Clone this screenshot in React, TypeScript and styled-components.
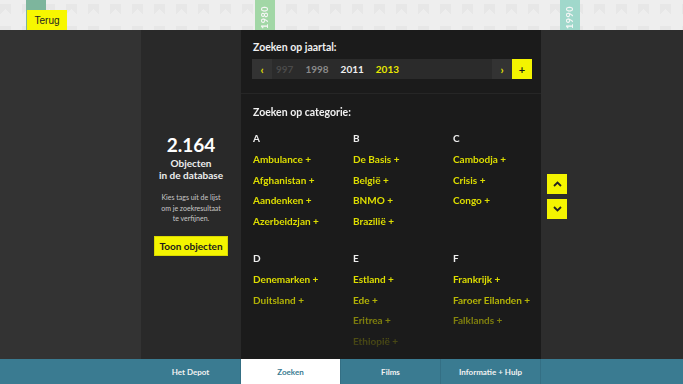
import styled, { createGlobalStyle } from "styled-components";

const GlobalStyle = createGlobalStyle`
  html, body {
    margin: 0;
    padding: 0;
    background: #1b1b1b;
    font-family: Lato, "Noto Sans", sans-serif;
  }
  * { box-sizing: border-box; }
`;

const Screen = styled.div`
  width: 683px;
  height: 384px;
  display: flex;
  flex-direction: column;
  overflow: hidden;
`;

const Timeline = styled.div`
  position: relative;
  height: 30px;
  flex: none;
  background-color: #eeeeee;
  background-image:
    linear-gradient(135deg, #e7e7e7 25%, transparent 25%),
    linear-gradient(225deg, #e7e7e7 25%, transparent 25%);
  background-size: 22px 22px;
  background-position: 0 4px, 11px 4px;
`;

const Marker = styled.div<{ $x: number; $color: string }>`
  position: absolute;
  top: 0;
  left: ${(p) => p.$x}px;
  width: 20px;
  height: 30px;
  background: ${(p) => p.$color};
  display: flex;
  align-items: flex-end;
  justify-content: center;
`;

const MarkerYear = styled.span`
  writing-mode: vertical-rl;
  transform: rotate(180deg);
  color: #f6f6f6;
  font-size: 9px;
  font-weight: 700;
  letter-spacing: 0.5px;
  line-height: 10px;
  margin-bottom: 1px;
`;

const BackButton = styled.button`
  position: absolute;
  left: 27px;
  top: 10px;
  width: 40px;
  height: 20px;
  border: none;
  background: #f7f700;
  color: #222;
  font-family: "Liberation Sans", Arial, sans-serif;
  font-size: 10px;
  padding: 0;
`;

const Body = styled.div`
  flex: 1;
  display: flex;
  min-height: 0;
`;

const Gutter = styled.div`
  width: 141px;
  background: #333333;
`;

const Stats = styled.div`
  width: 100px;
  background: #292929;
  display: flex;
  flex-direction: column;
  align-items: center;
  justify-content: center;
  text-align: center;
  color: #fff;
  padding-top: 2px;
`;

const Count = styled.div`
  font-size: 19px;
  font-weight: 700;
  line-height: 20px;
  margin-bottom: 2px;
`;

const CountLabel = styled.div`
  font-size: 10px;
  font-weight: 700;
  line-height: 12px;
  color: #eee;
`;

const Hint = styled.div`
  margin-top: 11px;
  font-size: 7px;
  line-height: 10.5px;
  color: #c8c8c8;
`;

const ShowButton = styled.button`
  margin-top: 12px;
  width: 74px;
  height: 20px;
  border: 1px solid #d8d800;
  background: #f4f400;
  color: #1b1b1b;
  font-family: Lato, "Noto Sans", sans-serif;
  font-size: 10px;
  font-weight: 700;
  padding: 0;
`;

const Main = styled.div`
  width: 300px;
  background: #1b1b1b;
  display: flex;
  flex-direction: column;
`;

const YearSection = styled.div`
  padding: 10px 9px 14px 11px;
  border-bottom: 1px solid #262626;
`;

const Heading = styled.div`
  color: #f0f0f0;
  font-size: 10.5px;
  font-weight: 700;
  line-height: 14px;
  padding-left: 1px;
`;

const YearBar = styled.div`
  margin-top: 5px;
  height: 20px;
  display: flex;
  background: #2b2b2b;
`;

const ArrowButton = styled.div<{ $yellow?: boolean }>`
  width: 20px;
  height: 20px;
  display: flex;
  align-items: center;
  justify-content: center;
  background: ${(p) => (p.$yellow ? "#f4f400" : "#333333")};
  color: ${(p) => (p.$yellow ? "#1b1b1b" : "#e8e800")};
  font-size: 11px;
  font-weight: 700;
`;

const Years = styled.div`
  flex: 1;
  display: flex;
  align-items: center;
  gap: 12px;
  padding-left: 4px;
  overflow: hidden;
`;

const Year = styled.span<{ $tone: string }>`
  font-size: 10px;
  font-weight: 700;
  color: ${(p) => p.$tone};
`;

const CategorySection = styled.div`
  flex: 1;
  padding: 11px 10px 0 11px;
  overflow: hidden;
  -webkit-mask-image: linear-gradient(to bottom, #000 72%, rgba(0,0,0,0.1) 97%);
  mask-image: linear-gradient(to bottom, #000 72%, rgba(0,0,0,0.1) 97%);
`;

const LetterGrid = styled.div`
  margin-top: 12px;
  display: grid;
  grid-template-columns: repeat(3, 100px);
  row-gap: 20px;
  padding-left: 1px;
`;

const Letter = styled.div`
  color: #eee;
  font-size: 10px;
  font-weight: 700;
  line-height: 14px;
  margin-bottom: 4px;
`;

const Tag = styled.div`
  color: #dede00;
  font-size: 10px;
  font-weight: 700;
  line-height: 20.5px;
  white-space: nowrap;
`;

const Side = styled.div`
  flex: 1;
  background: #2d2d2d;
  display: flex;
  flex-direction: column;
  gap: 5px;
  padding: 144px 0 0 6px;
`;

const ScrollButton = styled.div`
  width: 20px;
  height: 20px;
  background: #f4f400;
  display: flex;
  align-items: center;
  justify-content: center;
`;

const Nav = styled.div`
  height: 25px;
  flex: none;
  display: flex;
  padding-left: 141px;
  background: #3a7b91;
`;

const Tab = styled.div<{ $active?: boolean }>`
  width: 100px;
  display: flex;
  align-items: center;
  justify-content: center;
  font-size: 8px;
  font-weight: 700;
  color: ${(p) => (p.$active ? "#3a7b91" : "#f2f2f2")};
  background: ${(p) => (p.$active ? "#ffffff" : "transparent")};
  border-right: 1px solid #346f84;
`;

const columns: { letter: string; tags: string[] }[] = [
  { letter: "A", tags: ["Ambulance +", "Afghanistan +", "Aandenken +", "Azerbeidzjan +"] },
  { letter: "B", tags: ["De Basis +", "België +", "BNMO +", "Brazilië +"] },
  { letter: "C", tags: ["Cambodja  +", "Crisis  +", "Congo  +"] },
  { letter: "D", tags: ["Denemarken +", "Duitsland +"] },
  { letter: "E", tags: ["Estland +", "Ede +", "Eritrea +", "Ethiopië +"] },
  { letter: "F", tags: ["Frankrijk +", "Faroer Eilanden +", "Falklands +"] },
];

const Chevron = ({ up }: { up?: boolean }) => (
  <svg width="9" height="6" viewBox="0 0 9 6">
    <path
      d={up ? "M1 5 L4.5 1.5 L8 5" : "M1 1 L4.5 4.5 L8 1"}
      fill="none"
      stroke="#222"
      strokeWidth="1.8"
    />
  </svg>
);

export default function App() {
  return (
    <Screen>
      <GlobalStyle />
      <Timeline>
        <Marker $x={26} $color="#7db59d" />
        <Marker $x={255} $color="#a2d7a6">
          <MarkerYear>1980</MarkerYear>
        </Marker>
        <Marker $x={560} $color="#a0d8cb">
          <MarkerYear>1990</MarkerYear>
        </Marker>
        <BackButton>Terug</BackButton>
      </Timeline>
      <Body>
        <Gutter />
        <Stats>
          <Count>2.164</Count>
          <CountLabel>Objecten</CountLabel>
          <CountLabel>in de database</CountLabel>
          <Hint>
            Kies tags uit de lijst
            <br />
            om je zoekresultaat
            <br />
            te verfijnen.
          </Hint>
          <ShowButton>Toon objecten</ShowButton>
        </Stats>
        <Main>
          <YearSection>
            <Heading>Zoeken op jaartal:</Heading>
            <YearBar>
              <ArrowButton>‹</ArrowButton>
              <Years>
                <Year $tone="#4a4a4a">997</Year>
                <Year $tone="#8a8a8a">1998</Year>
                <Year $tone="#f0f0f0">2011</Year>
                <Year $tone="#e8e800">2013</Year>
              </Years>
              <ArrowButton>›</ArrowButton>
              <ArrowButton $yellow>+</ArrowButton>
            </YearBar>
          </YearSection>
          <CategorySection>
            <Heading>Zoeken op categorie:</Heading>
            <LetterGrid>
              {columns.map((c) => (
                <div key={c.letter}>
                  <Letter>{c.letter}</Letter>
                  {c.tags.map((t) => (
                    <Tag key={t}>{t}</Tag>
                  ))}
                </div>
              ))}
            </LetterGrid>
          </CategorySection>
        </Main>
        <Side>
          <ScrollButton>
            <Chevron up />
          </ScrollButton>
          <ScrollButton>
            <Chevron />
          </ScrollButton>
        </Side>
      </Body>
      <Nav>
        <Tab>Het Depot</Tab>
        <Tab $active>Zoeken</Tab>
        <Tab>Films</Tab>
        <Tab>Informatie + Hulp</Tab>
      </Nav>
    </Screen>
  );
}
